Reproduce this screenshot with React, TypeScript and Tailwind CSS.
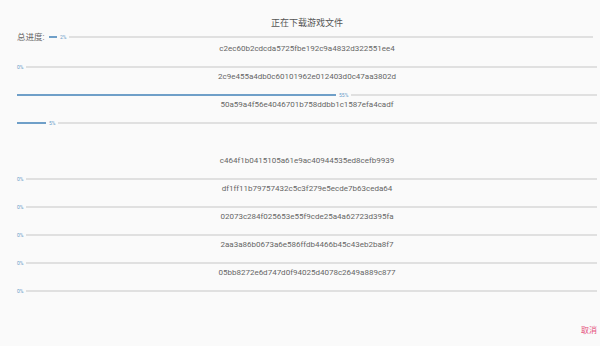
const files: (string | null)[] = [
  "c2ec60b2cdcda5725fbe192c9a4832d322551ee4",
  "2c9e455a4db0c60101962e012403d0c47aa3802d",
  "50a59a4f56e4046701b758ddbb1c1587efa4cadf",
  null,
  "c464f1b0415105a61e9ac40944535ed8cefb9939",
  "df1ff11b79757432c5c3f279e5ecde7b63ceda64",
  "02073c284f025653e55f9cde25a4a62723d395fa",
  "2aa3a86b0673a6e586ffdb4466b45c43eb2ba8f7",
  "05bb8272e6d747d0f94025d4078c2649a889c877",
]
const progress = [0, 55, 5, -1, 0, 0, 0, 0, 0]

function Bar({ pct }: { pct: number }) {
  return (
    <div className="flex items-center h-[10px]">
      {pct > 0 && <div className="h-[2px] bg-[#6f9fc8]" style={{ width: `${pct}%` }} />}
      <span className={`text-[5px] leading-none text-[#6b9cc9] mr-[3px] ${pct > 0 ? "ml-[3px]" : ""}`}>{pct}%</span>
      <div className="flex-1 h-[2px] bg-[#e0e0e0]" />
    </div>
  )
}

export default function App() {
  return (
    <div className="relative w-[600px] h-[346px] bg-[#fafafa] overflow-hidden font-['Roboto','Noto_Sans_CJK_SC',sans-serif]">
      <div className="flex flex-col pt-[17px] pl-[17px] pr-[3px]">
        <div className="h-[12px] flex items-center justify-center text-[9px] text-[#555] leading-none">正在下载游戏文件</div>
        <div className="mt-[3px] h-[10px] flex items-center pr-[4px]">
          <span className="text-[8.5px] text-[#666] leading-none w-[32px]">总进度:</span>
          <div className="flex-1 flex items-center">
            <div className="h-[2px] w-[8px] bg-[#6f9fc8]" />
            <span className="text-[5px] leading-none text-[#6b9cc9] mx-[3px]">2%</span>
            <div className="flex-1 h-[2px] bg-[#e0e0e0]" />
          </div>
        </div>
        <div className="mt-[2px] flex flex-col">
          {files.map((f, i) => (
            <div key={i} className="h-[28px] flex flex-col">
              {f !== null && (
                <>
                  <div className="h-[10px] flex items-center justify-center text-[8px] text-[#666] leading-none">{f}</div>
                  <div className="mt-[8px]">
                    <Bar pct={progress[i]} />
                  </div>
                </>
              )}
            </div>
          ))}
        </div>
        <div className="mt-[29px] h-[12px] flex items-center justify-end text-[8px] text-[#e5507a] leading-none">取消</div>
      </div>
    </div>
  )
}
